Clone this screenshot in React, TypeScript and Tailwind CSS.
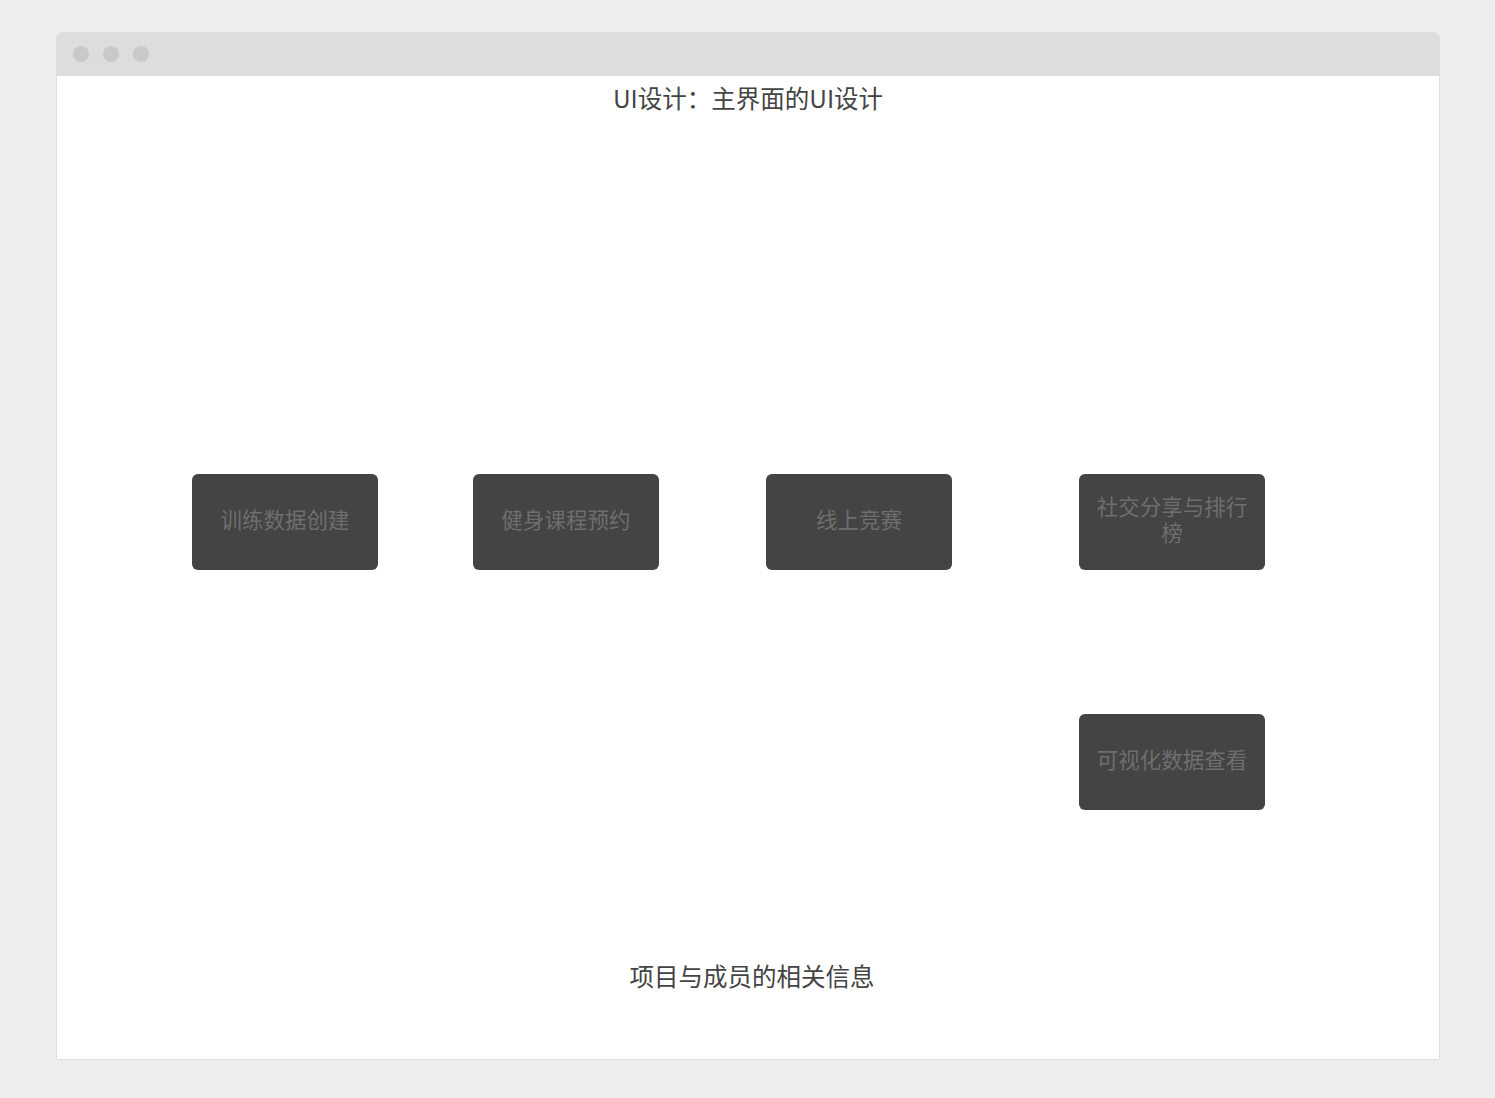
const font = {
  fontFamily: '"Noto Sans CJK SC", "Noto Sans", sans-serif',
};

const Node = ({ label, className = "" }: { label: string; className?: string }) => (
  <div
    className={`w-[186px] h-[96px] shrink-0 rounded-[6px] bg-[#444444] px-[12px] pb-[7px] flex items-center justify-center text-center text-[21.5px] leading-[26px] text-[#6e6e6e] ${className}`}
  >
    {label}
  </div>
);

export default function App() {
  return (
    <div className="min-h-[1098px] w-[1495px] bg-[#eeeeee] pt-[32px] pl-[56px]" style={font}>
      <div className="w-[1384px] h-[1028px] flex flex-col bg-white border border-[#dedede] rounded-t-[6px] overflow-hidden">
        {/* title bar */}
        <div className="h-[44px] shrink-0 bg-[#dddddd] flex items-center gap-[14px] pl-[17px] -mx-px -mt-px">
          <span className="w-[16px] h-[16px] rounded-full bg-[#c9c9c9]" />
          <span className="w-[16px] h-[16px] rounded-full bg-[#c9c9c9]" />
          <span className="w-[16px] h-[16px] rounded-full bg-[#c9c9c9]" />
        </div>

        <div className="pt-[5px] text-center text-[24.5px] leading-[34px] text-[#444444]">
          UI设计：主界面的UI设计
        </div>

        <div className="mt-[359px] flex">
          <Node label="训练数据创建" className="ml-[135px]" />
          <Node label="健身课程预约" className="ml-[95px]" />
          <Node label="线上竞赛" className="ml-[107px]" />
          <Node label="社交分享与排行榜" className="ml-[127px]" />
        </div>

        <div className="mt-[144px] flex">
          <Node label="可视化数据查看" className="ml-[1022px]" />
        </div>

        <div className="mt-[149px] pl-[8px] text-center text-[24.5px] leading-[34px] text-[#444444]">
          项目与成员的相关信息
        </div>
      </div>
    </div>
  );
}
